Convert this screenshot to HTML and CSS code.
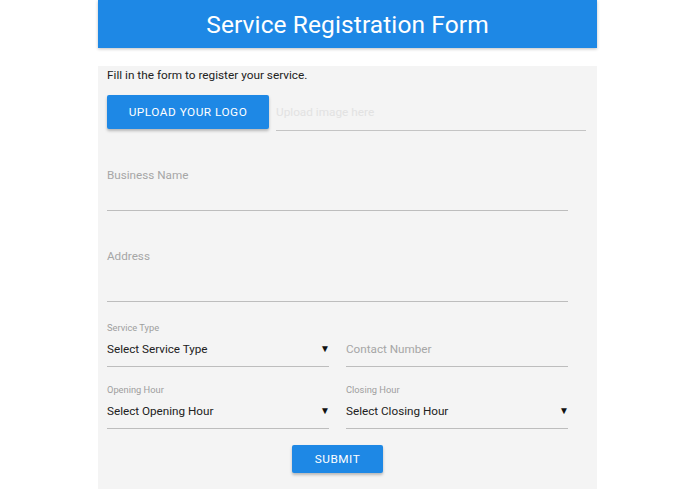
FILE: index.html
```html
<!DOCTYPE html>
<html>
<head>
<meta charset="utf-8">
<link rel="stylesheet" href="styles.css">
</head>
<body>
<div class="page">
  <header class="header"><h1 class="title">Service Registration Form</h1></header>
  <section class="panel">
    <p class="intro">Fill in the form to register your service.</p>
    <div class="upload-row">
      <button class="btn btn-upload">UPLOAD YOUR LOGO</button>
      <div class="upload-input">Upload image here</div>
    </div>
    <div class="field field-name"><span class="placeholder">Business Name</span></div>
    <div class="field field-address"><span class="placeholder">Address</span></div>
    <div class="row row-first">
      <div class="col select">
        <span class="small-label">Service Type</span>
        <div class="select-line"><span class="value">Select Service Type</span><span class="arrow">▼</span></div>
      </div>
      <div class="col">
        <div class="select-line"><span class="placeholder">Contact Number</span></div>
      </div>
    </div>
    <div class="row row-second">
      <div class="col select">
        <span class="small-label">Opening Hour</span>
        <div class="select-line"><span class="value">Select Opening Hour</span><span class="arrow">▼</span></div>
      </div>
      <div class="col select">
        <span class="small-label">Closing Hour</span>
        <div class="select-line"><span class="value">Select Closing Hour</span><span class="arrow">▼</span></div>
      </div>
    </div>
    <div class="submit-row"><button class="btn btn-submit">SUBMIT</button></div>
  </section>
</div>
</body>
</html>
```

FILE: styles.css
```css
* { box-sizing: border-box; }
body {
  margin: 0;
  background: #ffffff;
  font-family: Roboto, "Liberation Sans", sans-serif;
}
.page {
  width: 499px;
  margin: 0 auto;
}
.header {
  height: 48px;
  background: #1e88e5;
  box-shadow: 0 1px 3px rgba(0,0,0,0.25);
  display: flex;
  align-items: center;
  justify-content: center;
}
.title {
  margin: 0;
  color: #ffffff;
  font-weight: 400;
  font-size: 24.5px;
  letter-spacing: 0.1px;
}
.panel {
  margin-top: 18px;
  height: 423px;
  background: #f4f4f4;
  padding: 0 29px 0 9px;
}
.intro {
  margin: 0;
  padding-top: 1px;
  font-size: 11.8px;
  line-height: 16px;
  color: #222;
}
.upload-row {
  display: flex;
  margin-top: 12px;
  margin-right: -18px;
  align-items: stretch;
}
.btn {
  border: none;
  background: #1e88e5;
  color: #fff;
  font-family: Roboto, "Liberation Sans", sans-serif;
  border-radius: 2px;
  box-shadow: 0 2px 3px rgba(0,0,0,0.25);
  letter-spacing: 0.5px;
  padding: 0;
}
.btn-upload {
  width: 162px;
  height: 34px;
  font-size: 11.8px;
}
.upload-input {
  flex: 1;
  margin-left: 7px;
  height: 36px;
  border-bottom: 1px solid #c4c4c4;
  color: #e2e2e2;
  font-size: 11.8px;
  line-height: 34px;
}
.field {
  border-bottom: 1px solid #bdbdbd;
}
.placeholder {
  color: #a6a6a6;
  font-size: 11.7px;
  line-height: 16px;
  display: block;
}
.field-name {
  margin-top: 36px;
  height: 44px;
}
.field-address {
  margin-top: 37px;
  height: 54px;
}
.row {
  display: flex;
  gap: 17px;
  align-items: flex-end;
}
.row-first { margin-top: 20px; }
.row-second { margin-top: 17px; }
.col {
  flex: 1;
  display: flex;
  flex-direction: column;
}
.small-label {
  font-size: 9.3px;
  line-height: 12px;
  color: #9e9e9e;
}
.select-line {
  margin-top: 7px;
  height: 26px;
  border-bottom: 1px solid #bdbdbd;
  display: flex;
  justify-content: space-between;
  align-items: flex-start;
}
.value {
  font-size: 11.7px;
  line-height: 16px;
  color: #212121;
}
.arrow {
  font-size: 10px;
  line-height: 16px;
  color: #111;
  margin-right: -1px;
}
.submit-row {
  display: flex;
  justify-content: center;
  margin-top: 16px;
}
.btn-submit {
  width: 91px;
  height: 28px;
  font-size: 11.8px;
}
```
